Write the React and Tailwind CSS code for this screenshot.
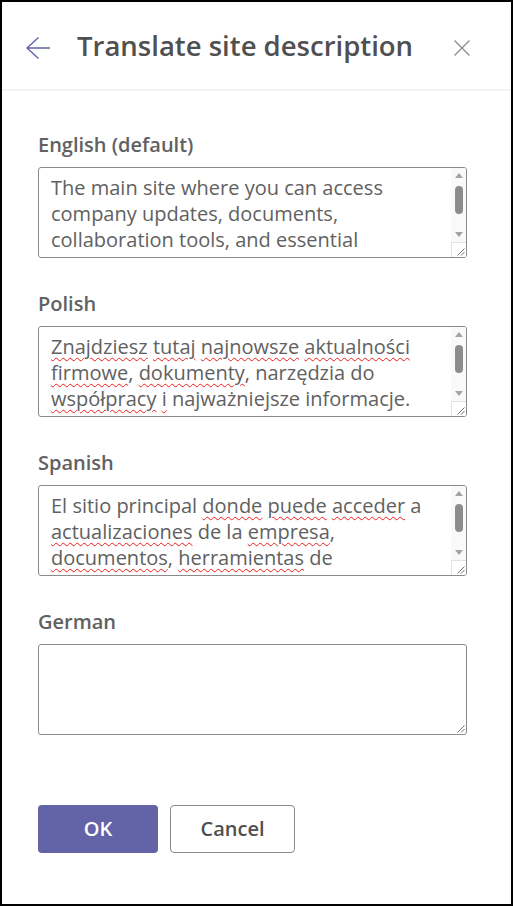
const fields = [
  {
    label: 'English (default)',
    scroll: true,
    lines: [
      'The main site where you can access',
      'company updates, documents,',
      'collaboration tools, and essential',
      'information.',
    ],
    typos: [],
  },
  {
    label: 'Polish',
    scroll: true,
    lines: [
      'Znajdziesz tutaj najnowsze aktualności',
      'firmowe, dokumenty, narzędzia do',
      'współpracy i najważniejsze informacje.',
    ],
    typos: ['Znajdziesz', 'tutaj', 'najnowsze', 'aktualności', 'firmowe', 'dokumenty', 'współpracy', 'i'],
  },
  {
    label: 'Spanish',
    scroll: true,
    lines: [
      'El sitio principal donde puede acceder a',
      'actualizaciones de la empresa,',
      'documentos, herramientas de',
      'colaboración e información esencial.',
    ],
    typos: ['donde', 'puede', 'acceder', 'actualizaciones', 'empresa', 'documentos', 'herramientas', 'colaboración'],
  },
  { label: 'German', scroll: false, lines: [], typos: [] },
]

// splits a line into words and marks the ones the spell checker flags
function Line({ text, typos }) {
  const parts = text.split(/(\s+)/)
  return (
    <div className="whitespace-nowrap">
      {parts.map((p, i) => {
        const m = p.match(/^([\p{L}]+)(.*)$/u)
        if (m && typos.includes(m[1])) {
          return (
            <span key={i}>
              <span className="underline decoration-wavy decoration-[#f21c1c] decoration-[1.2px] underline-offset-[3px]">{m[1]}</span>
              {m[2]}
            </span>
          )
        }
        return <span key={i}>{p}</span>
      })}
    </div>
  )
}

function Grip() {
  return (
    <svg width="9" height="9" viewBox="0 0 9 9" className="block">
      <path d="M8.5 1.5 1.5 8.5M8.5 5 5 8.5" stroke="#707070" strokeWidth="1" fill="none" />
    </svg>
  )
}

function Scrollbar() {
  return (
    <div className="flex w-[15px] flex-col bg-[#f9f9f9]">
      <div className="flex h-[15px] items-center justify-center">
        <div className="h-0 w-0 border-x-[4px] border-b-[5px] border-x-transparent border-b-[#a3a3a3]" />
      </div>
      <div className="flex-1 pt-[3px]">
        <div className="mx-auto h-[28px] w-[8px] rounded-full bg-[#8c8c8c]" />
      </div>
      <div className="flex h-[15px] items-center justify-center">
        <div className="h-0 w-0 border-x-[4px] border-t-[5px] border-x-transparent border-t-[#a3a3a3]" />
      </div>
      <div className="flex h-[15px] items-end justify-end border-l border-t border-[#e3e3e3] bg-white pb-[1px] pr-[1px]">
        <Grip />
      </div>
    </div>
  )
}

function Field({ label, lines, typos, scroll }) {
  return (
    <div className="flex flex-col">
      <span className="text-[20px] font-semibold leading-[28px] text-[#616161]">{label}</span>
      <div className="relative mt-[8px] flex h-[91px] w-[429px] overflow-hidden rounded-[3px] border border-[#8a8a8a] bg-white">
        <div className="flex-1 overflow-hidden pl-[12px] pt-[7px] text-[20px] leading-[26px] text-[#616161]">
          {lines.map((l) => (
            <Line key={l} text={l} typos={typos} />
          ))}
        </div>
        {scroll ? (
          <Scrollbar />
        ) : (
          <div className="absolute bottom-[1px] right-[1px]">
            <Grip />
          </div>
        )}
      </div>
    </div>
  )
}

export default function App() {
  return (
    <div
      className="flex h-[906px] w-[513px] flex-col border-2 border-black bg-white"
      style={{ fontFamily: '"Open Sans", "Noto Sans", sans-serif' }}
    >
      <header className="flex h-[89px] items-center border-b-2 border-[#f3f3f3] pl-[24px] pr-[41px]">
        <svg width="24" height="22" viewBox="0 0 24 22" className="mt-[5px] shrink-0" fill="none" stroke="#6264a7" strokeWidth="1.4">
          <path d="M24 11H1M12.5 0.5 1 11l11.5 10.5" />
        </svg>
        <h1 className="ml-[27px] text-[27.5px] font-semibold leading-[36px] text-[#505050]">Translate site description</h1>
        <svg width="16" height="16" viewBox="0 0 16 16" className="ml-auto mt-[5px] shrink-0" fill="none" stroke="#8a8a8a" strokeWidth="1.3">
          <path d="M0.5 0.5l15 15M15.5 0.5l-15 15" />
        </svg>
      </header>

      <main className="flex flex-col gap-[32px] pl-[36px] pt-[40px]">
        {fields.map((f) => (
          <Field key={f.label} {...f} />
        ))}
      </main>

      <div className="mt-[70px] flex gap-[12px] pl-[36px]">
        <button className="h-[48px] w-[120px] rounded-[4px] bg-[#6264a7] text-[20px] font-semibold text-white">OK</button>
        <button className="h-[48px] w-[125px] rounded-[4px] border border-[#8a8a8a] bg-white text-[20px] font-semibold text-[#4f4f4f]">
          Cancel
        </button>
      </div>
    </div>
  )
}
